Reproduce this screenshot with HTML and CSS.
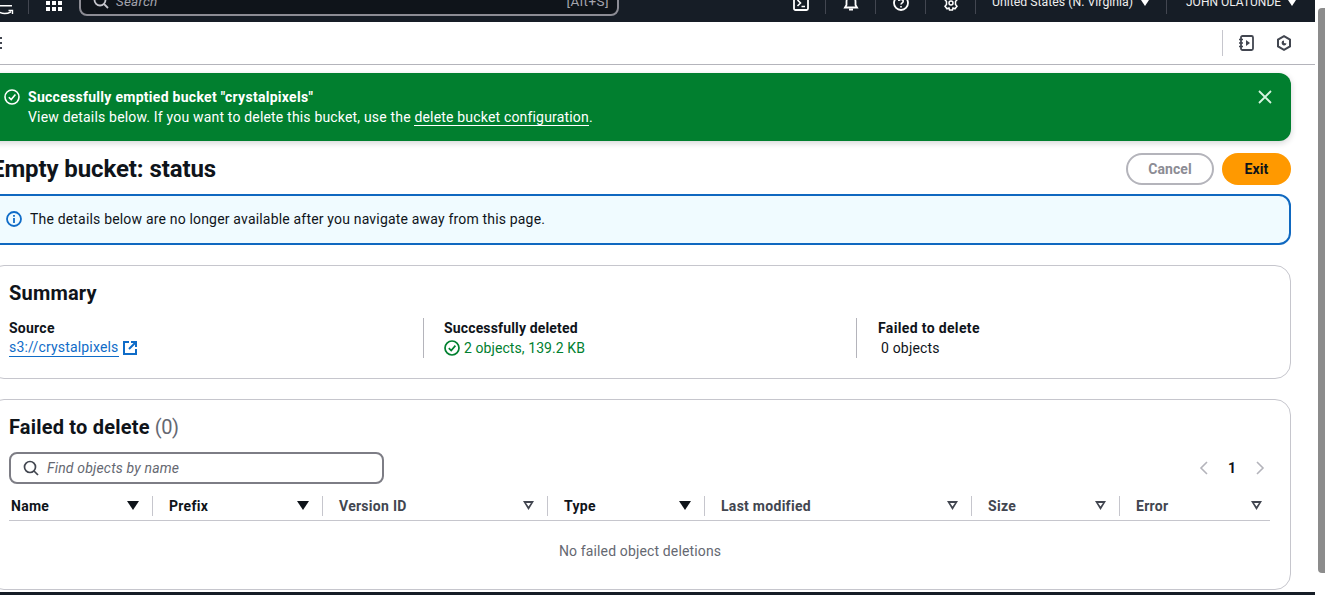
FILE: index.html
```html
<!DOCTYPE html>
<html lang="en">
<head>
<meta charset="utf-8">
<title>Empty bucket: status</title>
<link rel="stylesheet" href="styles.css">
</head>
<body>
<div class="app">
  <header class="nav">
    <svg class="nav-logo" viewBox="0 0 16 14" width="16" height="14"><path d="M0 6.5C4 9 9 9 13 6.8M10.500 5.500H14.500V9" fill="none" stroke="#fff" stroke-width="1.400"/><path d="M2 0.500H14" stroke="#fff" stroke-width="2"/></svg>
    <span class="nav-sep sep-logo"></span>
    <svg class="nav-grid" viewBox="0 0 16 16" width="16" height="16"><g fill="#fff"><rect x="0" y="0" width="4" height="4"/><rect x="6" y="0" width="4" height="4"/><rect x="12" y="0" width="4" height="4"/><rect x="0" y="6" width="4" height="4"/><rect x="6" y="6" width="4" height="4"/><rect x="12" y="6" width="4" height="4"/><rect x="0" y="12" width="4" height="4"/><rect x="6" y="12" width="4" height="4"/><rect x="12" y="12" width="4" height="4"/></g></svg>
    <div class="nav-search">
      <svg viewBox="0 0 16 16" width="16" height="16"><circle cx="7" cy="7" r="5.500" fill="none" stroke="#c6c6cd" stroke-width="1.800"/><path d="M11 11L15 15" stroke="#c6c6cd" stroke-width="1.800"/></svg>
      <span class="nav-search-text">Search</span>
      <span class="nav-search-key">[Alt+S]</span>
    </div>
    <svg class="nav-icon icon-shell" viewBox="0 0 16 16" width="16" height="16"><rect x="1" y="1" width="14" height="14" rx="1.500" fill="none" stroke="#fff" stroke-width="1.800"/><path d="M4.500 5L7.500 8L4.500 11M8.500 11.500H12" fill="none" stroke="#fff" stroke-width="1.600"/></svg>
    <span class="nav-sep"></span>
    <svg class="nav-icon" viewBox="0 0 16 16" width="16" height="16"><path d="M2 12.500H14L12.500 10V6.500C12.500 4 10.500 2 8 2S3.500 4 3.500 6.500V10Z" fill="none" stroke="#fff" stroke-width="1.800"/><path d="M6 14.500H10" stroke="#fff" stroke-width="2"/></svg>
    <span class="nav-sep"></span>
    <svg class="nav-icon" viewBox="0 0 16 16" width="16" height="16"><circle cx="8" cy="8" r="7" fill="none" stroke="#fff" stroke-width="1.800"/><path d="M5.800 6C6 3.800 10.200 3.800 10.200 6.200C10.200 7.800 8 7.800 8 9.500M8 11V12.500" fill="none" stroke="#fff" stroke-width="1.600"/></svg>
    <span class="nav-sep"></span>
    <svg class="nav-icon" viewBox="0 0 16 16" width="16" height="16"><path d="M6.500 1H9.500L10 3L12 2.200L14 4.800L12.500 6.500V9.500L14 11.200L12 13.800L10 13L9.500 15H6.500L6 13L4 13.800L2 11.200L3.500 9.500V6.500L2 4.800L4 2.200L6 3Z" fill="none" stroke="#fff" stroke-width="1.500"/><circle cx="8" cy="8" r="2" fill="none" stroke="#fff" stroke-width="1.500"/></svg>
    <span class="nav-sep"></span>
    <span class="nav-text region">United States (N. Virginia)</span>
    <span class="nav-caret"></span>
    <span class="nav-sep sep-user"></span>
    <span class="nav-text user">JOHN OLATUNDE</span>
    <span class="nav-caret"></span>
  </header>

  <div class="toolbar">
    <svg class="tool-menu" viewBox="0 0 3 12" width="3" height="12"><path d="M0 1H3M0 6H3M0 11H3" stroke="#424650" stroke-width="2"/></svg>
    <span class="tool-sep"></span>
    <svg class="tool-icon" viewBox="0 0 16 16" width="16" height="16"><rect x="3" y="1" width="12" height="14" rx="1.500" fill="none" stroke="#424650" stroke-width="1.800"/><path d="M1 4.500H5M1 8H5M1 11.500H5" stroke="#424650" stroke-width="1.600"/><path d="M8 5L12 8L8 11Z" fill="#424650"/></svg>
    <svg class="tool-icon tool-last" viewBox="0 0 16 16" width="16" height="16"><path d="M8 1.200L14 4.600V11.400L8 14.800L2 11.400V4.600Z" fill="none" stroke="#424650" stroke-width="2"/><path d="M8 5.500A2.500 2.500 0 1 0 10.500 8.500L8 8Z" fill="#424650"/></svg>
  </div>

  <main class="main">
    <section class="flash">
      <svg class="flash-icon" viewBox="0 0 16 16" width="16" height="16"><circle cx="8" cy="8" r="7" fill="none" stroke="#fff" stroke-width="1.600"/><path d="M4.800 8.200L7.200 10.600L11.400 5.600" fill="none" stroke="#fff" stroke-width="1.600"/></svg>
      <div class="flash-body">
        <div class="flash-title">Successfully emptied bucket "crystalpixels"</div>
        <div class="flash-text">View details below. If you want to delete this bucket, use the <a class="flash-link">delete bucket configuration</a>.</div>
      </div>
      <svg class="flash-close" viewBox="0 0 16 16" width="16" height="16"><path d="M2 2L14 14M14 2L2 14" stroke="#d6f5e0" stroke-width="1.800"/></svg>
    </section>

    <div class="page-head">
      <h1 class="page-title">Empty bucket: status</h1>
      <div class="page-actions">
        <button class="btn btn-cancel">Cancel</button>
        <button class="btn btn-exit">Exit</button>
      </div>
    </div>

    <section class="alert">
      <svg viewBox="0 0 16 16" width="16" height="16"><circle cx="8" cy="8" r="7" fill="none" stroke="#0f6cc8" stroke-width="1.800"/><path d="M8 7V12M8 4V5.800" stroke="#0f6cc8" stroke-width="1.800"/></svg>
      <span class="alert-text">The details below are no longer available after you navigate away from this page.</span>
    </section>

    <section class="card summary">
      <h2 class="card-title">Summary</h2>
      <div class="summary-cols">
        <div class="summary-col col-source">
          <div class="kv-label">Source</div>
          <div class="kv-value">
            <a class="link">s3://crystalpixels</a>
            <svg class="ext" viewBox="0 0 16 16" width="16" height="16"><path d="M7 2H2V14H14V9" fill="none" stroke="#0f6cc8" stroke-width="2"/><path d="M9 2H14V7M14 2L7 9" fill="none" stroke="#0f6cc8" stroke-width="2"/></svg>
          </div>
        </div>
        <div class="summary-col col-ok">
          <div class="kv-label label-ok">Successfully deleted</div>
          <div class="kv-value ok">
            <svg viewBox="0 0 16 16" width="16" height="16"><circle cx="8" cy="8" r="7" fill="none" stroke="#00802f" stroke-width="1.700"/><path d="M4.800 8.200L7.200 10.600L11.400 5.600" fill="none" stroke="#00802f" stroke-width="1.700"/></svg>
            <span>2 objects, 139.2 KB</span>
          </div>
        </div>
        <div class="summary-col col-fail">
          <div class="kv-label label-fail">Failed to delete</div>
          <div class="kv-value plain">0 objects</div>
        </div>
      </div>
    </section>

    <section class="card failed">
      <h2 class="card-title">Failed to delete <span class="count">(0)</span></h2>
      <div class="filter-row">
        <div class="filter">
          <svg viewBox="0 0 16 16" width="16" height="16"><circle cx="7" cy="7" r="5.500" fill="none" stroke="#424650" stroke-width="1.700"/><path d="M11 11L15 15" stroke="#424650" stroke-width="1.700"/></svg>
          <span class="filter-text">Find objects by name</span>
        </div>
        <div class="pager">
          <svg viewBox="0 0 10 16" width="10" height="16"><path d="M8 2L2 8L8 14" fill="none" stroke="#b4b4bb" stroke-width="1.600"/></svg>
          <span class="pager-num">1</span>
          <svg viewBox="0 0 10 16" width="10" height="16"><path d="M2 2L8 8L2 14" fill="none" stroke="#b4b4bb" stroke-width="1.600"/></svg>
        </div>
      </div>
      <div class="thead">
        <div class="th th-first"><span class="th-label strong">Name</span><span class="caret-solid"></span></div>
        <div class="th"><span class="th-label strong">Prefix</span><span class="caret-solid"></span></div>
        <div class="th"><span class="th-label">Version ID</span><span class="caret-open"></span></div>
        <div class="th"><span class="th-label strong">Type</span><span class="caret-solid"></span></div>
        <div class="th"><span class="th-label">Last modified</span><span class="caret-open"></span></div>
        <div class="th"><span class="th-label">Size</span><span class="caret-open"></span></div>
        <div class="th th-last"><span class="th-label">Error</span><span class="caret-open"></span></div>
      </div>
      <div class="empty">No failed object deletions</div>
    </section>
  </main>
  <div class="bottom-bar"></div>
</div>
<div class="scroll-thumb"></div>
</body>
</html>
```

FILE: styles.css
```css
* { box-sizing: border-box; }
html, body { margin: 0; height: 595px; overflow: hidden; background: #fff; }
body { font-family: Roboto, "Liberation Sans", sans-serif; font-size: 14px; line-height: 20px; letter-spacing: 0.18px; color: #0f141a; }
.app { width: 1315px; height: 595px; display: flex; flex-direction: column; overflow: hidden; }

.nav { flex: none; height: 22px; background: #161d26; display: flex; align-items: flex-end; overflow: hidden; color: #fff; }
.nav-logo { flex: none; margin: 0 0 3px -2px; }
.nav-sep { flex: none; width: 1px; height: 24px; margin-bottom: 8px; background: #424650; }
.sep-logo { margin-left: 14px; }
.nav-grid { flex: none; margin: 0 0 11px 17px; }
.nav-search { flex: none; width: 540px; height: 30px; margin: 0 0 6px 17px; padding: 0 8px 0 10px; border: 2px solid #8c8c94; border-radius: 8px; background: #0f141a; display: flex; align-items: flex-end; }
.nav-search svg { margin-bottom: 5px; margin-left: 2px; flex: none; }
.nav-search-text { margin: 0 0 3px 7px; font-style: italic; color: #a4a4ad; font-size: 13.500px; }
.nav-search-key { margin: 0 0 3px auto; color: #a4a4ad; font-size: 13.500px; letter-spacing: 0.450px; }
.nav-icon { flex: none; margin: 0 16px 11px 17px; }
.icon-shell { margin-left: 174px; }
.nav-text { flex: none; margin-bottom: 11px; line-height: 18px; color: #eee; white-space: nowrap; letter-spacing: 0; }
.region { margin-left: 16px; width: 143px; font-size: 12.300px; }
.user { margin-left: 19px; width: 96px; font-size: 12px; }
.nav-caret { flex: none; width: 0; height: 0; margin: 0 0 16px 6px; border-left: 4px solid transparent; border-right: 4px solid transparent; border-top: 6px solid #fff; }
.sep-user { margin-left: 17px; }

.toolbar { flex: none; height: 43px; border-bottom: 1px solid #b4b4bb; display: flex; align-items: center; padding-right: 23px; }
.tool-menu { flex: none; margin-left: -1px; }
.tool-sep { flex: none; width: 1px; height: 26px; margin-left: auto; background: #c6c6cd; }
.tool-icon { flex: none; margin-left: 15px; }
.tool-last { margin-left: 22px; }

.main { flex: none; width: 1303px; height: 526px; margin-left: -12px; padding-top: 8px; display: flex; flex-direction: column; }

.flash { flex: none; height: 68px; margin-left: -7px; padding: 14px 18px 0 23px; background: #017f2f; color: #fff; border-radius: 12px; box-shadow: 0 2px 6px rgba(15, 20, 26, 0.18); display: flex; align-items: flex-start; }
.flash-icon { flex: none; margin-top: 2px; }
.flash-body { flex: 1; margin-left: 8px; }
.flash-title { font-weight: 700; letter-spacing: 0.280px; }
.flash-link { color: #fff; text-decoration: none; border-bottom: 1px solid #fff; }
.flash-close { flex: none; margin-top: 2px; }

.page-head { flex: none; height: 32px; margin-top: 12px; display: flex; align-items: center; justify-content: space-between; }
.page-title { margin: 0 0 0 3px; font-size: 24px; line-height: 32px; font-weight: 700; letter-spacing: -0.100px; }
.page-actions { display: flex; gap: 8px; }
.btn { height: 32px; border-radius: 16px; font: 700 14px/20px Roboto, "Liberation Sans", sans-serif; letter-spacing: 0.100px; }
.btn-cancel { width: 88px; background: #fff; color: #8c8c94; border: 2px solid #b4b4bb; }
.btn-exit { width: 69px; background: #ff9900; color: #0f141a; border: none; }

.alert { flex: none; height: 51px; margin-top: 9px; padding: 0 20px 2px 16px; background: #f0fbff; border: 2px solid #0f68c0; border-radius: 12px; display: flex; align-items: center; gap: 8px; }
.alert svg { flex: none; }

.card { flex: none; border: 1px solid #c6c6cd; border-radius: 16px; background: #fff; padding: 0 20px; }
.card-title { margin: 0; font-size: 20px; line-height: 24px; font-weight: 700; letter-spacing: 0.200px; }
.summary { height: 114px; margin-top: 20px; padding-top: 15px; }
.summary-cols { display: flex; margin-top: 13px; }
.summary-col { height: 40px; }
.col-source { width: 414px; }
.col-ok { width: 433px; padding-left: 20px; border-left: 1px solid #b4b4bb; }
.col-fail { padding-left: 21px; border-left: 1px solid #b4b4bb; }
.kv-label { font-weight: 700; letter-spacing: 0.250px; }
.label-ok { letter-spacing: 0.150px; }
.label-fail { letter-spacing: 0.350px; }
.kv-value { display: flex; align-items: center; }
.link { color: #0f6cc8; border-bottom: 1px solid #0f6cc8; line-height: 18px; }
.ext { margin-left: 3px; }
.ok { color: #00802f; gap: 4px; letter-spacing: 0.080px; }
.plain { padding-left: 3px; }

.failed { height: 191px; margin-top: 20px; padding-top: 15px; padding-right: 20px; }
.count { color: #656871; font-weight: 400; letter-spacing: -0.400px; }
.filter-row { display: flex; align-items: center; justify-content: space-between; margin-top: 13px; }
.filter { width: 375px; height: 32px; padding-left: 12px; border: 2px solid #7d7d85; border-radius: 8px; display: flex; align-items: center; gap: 8px; }
.filter svg { flex: none; }
.filter-text { font-style: italic; color: #656871; }
.pager { display: flex; align-items: center; gap: 19px; padding-right: 5px; }
.pager-num { font-weight: 700; width: 8px; text-align: center; }

.thead { display: grid; grid-template-columns: 144px 170px 225px 157px 267px 148px 150px; height: 26px; margin-top: 11px; padding-bottom: 4px; border-bottom: 1px solid #c6c6cd; align-items: center; }
.th { height: 20px; display: flex; align-items: center; justify-content: space-between; padding: 0 13px 0 16px; border-right: 1px solid #c6c6cd; }
.th-first { padding-left: 2px; }
.th-last { border-right: none; padding-right: 8px; }
.th-label { font-weight: 700; color: #424650; letter-spacing: 0.280px; }
.th-label.strong { color: #0f141a; }
.caret-solid { width: 0; height: 0; border-left: 6px solid transparent; border-right: 6px solid transparent; border-top: 9px solid #0f141a; }
.caret-open { width: 11px; height: 9px; background: #424650; clip-path: polygon(0 0, 100% 0, 50% 100%, 0 0, 28% 22%, 50% 62%, 72% 22%, 28% 22%); }
.empty { margin-top: 20px; padding-left: 1px; text-align: center; color: #656871; letter-spacing: 0.140px; }

.bottom-bar { flex: none; height: 4px; margin-top: 1px; background: #161d26; }
.scroll-thumb { position: absolute; left: 1318px; top: 8px; width: 7px; height: 565px; background: #8c8c8c; border-radius: 4px 0 0 4px; }
```
